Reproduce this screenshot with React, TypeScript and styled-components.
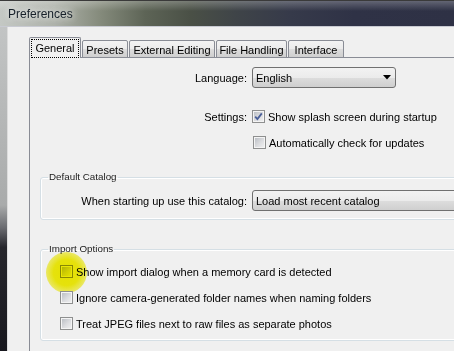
import * as React from 'react';
import styled, { createGlobalStyle } from 'styled-components';

const Global = createGlobalStyle`
    html, body {
        margin: 0;
        padding: 0;
        background: #f0f0f0;
    }
    body {
        font-family: "Liberation Sans", Arial, sans-serif;
        font-size: 11px;
        color: #000;
    }
`;

const Window = styled.div`
    width: 454px;
    height: 351px;
    overflow: hidden;
    display: flex;
    flex-direction: column;
`;

const TitleBar = styled.div`
    height: 27px;
    flex: 0 0 27px;
    display: flex;
    align-items: center;
    padding-left: 8px;
    border-top: 1px solid #3a3a3a;
    border-bottom: 1px solid #c8cad2;
    box-sizing: border-box;
    font-size: 12px;
    color: #17202a;
    text-shadow: 0 0 6px rgba(255, 255, 255, 0.9), 0 0 10px rgba(255, 255, 255, 0.6);
    background:
        linear-gradient(180deg, rgba(255, 255, 255, 0.25) 0%, rgba(255, 255, 255, 0) 40%),
        linear-gradient(90deg, #c4c8c4 0%, #aeb2aa 12%, #858b7c 22%, #5d6456 32%, #4a5046 42%, #3f4448 52%, #363a4a 64%, #2f3246 78%, #2e3145 100%);
`;

const Body = styled.div`
    flex: 1;
    display: flex;
    min-height: 0;
`;

const Frame = styled.div`
    flex: 0 0 7px;
    background: linear-gradient(180deg, #c2c4c4 0%, #a9abab 55%, #6a6b70 62%, #26262c 68%, #18181e 100%);
`;

const Client = styled.div`
    flex: 0 0 490px;
    background: #f0f0f0;
    border-left: 1px solid #dcdcdc;
    padding: 10px 0 0 21px;
    box-sizing: border-box;
`;

const TabList = styled.div`
    display: flex;
    align-items: flex-end;
    height: 20px;
    position: relative;
    z-index: 1;
`;

const Tab = styled.div<{ $w: number; $active?: boolean }>`
    width: ${p => p.$w}px;
    height: ${p => (p.$active ? 21 : 18)}px;
    box-sizing: border-box;
    margin-right: 1px;
    margin-bottom: -1px;
    border: 1px solid #898c95;
    border-bottom: ${p => (p.$active ? 'none' : '1px solid #898c95')};
    border-radius: 2px 2px 0 0;
    display: flex;
    align-items: center;
    justify-content: center;
    white-space: nowrap;
    background: ${p => (p.$active ? '#f0f0f0' : 'linear-gradient(180deg, #f3f3f3 0%, #ebebeb 50%, #dddddd 51%, #cfcfcf 100%)')};
    padding-top: ${p => (p.$active ? 0 : 1)}px;
`;

const Focus = styled.span`
    outline: 1px dotted #000;
    outline-offset: 0;
    padding: 2px 3px 3px;
    line-height: 12px;
`;

const Panel = styled.div`
    border-top: 1px solid #898c95;
    border-left: 1px solid #898c95;
    background: #f0f0f0;
    height: 320px;
    padding: 9px 10px 0 10px;
    box-sizing: border-box;
`;

const FormRow = styled.div<{ $h: number; $top: number }>`
    display: flex;
    align-items: center;
    gap: 5px;
    height: ${p => p.$h}px;
    margin-top: ${p => p.$top}px;
`;

const Label = styled.div<{ $w: number }>`
    width: ${p => p.$w}px;
    flex: 0 0 auto;
    text-align: right;
    white-space: nowrap;
`;

const Select = styled.div<{ $w: number }>`
    width: ${p => p.$w}px;
    height: 21px;
    box-sizing: border-box;
    border: 1px solid #707070;
    border-radius: 3px;
    background: linear-gradient(180deg, #f2f2f2 0%, #ebebeb 50%, #dddddd 51%, #cfcfcf 100%);
    display: flex;
    align-items: center;
    justify-content: space-between;
    padding: 0 4px 0 3px;
    flex: 0 0 auto;
    white-space: nowrap;
`;

const Check = styled.div`
    width: 13px;
    height: 13px;
    box-sizing: border-box;
    border: 1px solid #8e8f8f;
    box-shadow: inset 0 0 0 1px #f4f4f4;
    background: linear-gradient(135deg, #b6bac0 0%, #dcdde0 55%, #f2f2f2 100%);
    flex: 0 0 auto;
    display: flex;
    align-items: center;
    justify-content: center;
`;

const CheckRow = styled.div<{ $top: number }>`
    display: flex;
    align-items: center;
    gap: 3px;
    height: 13px;
    margin-top: ${p => p.$top}px;
    white-space: nowrap;
    position: relative;
`;

const Indent = styled.div<{ $left: number }>`
    padding-left: ${p => p.$left}px;
`;

const Group = styled.fieldset<{ $top: number; $pt: number; $pb: number }>`
    margin: ${p => p.$top}px 0 0 0;
    padding: ${p => p.$pt}px 0 ${p => p.$pb}px 0;
    border: 1px solid #d5dfe5;
    border-radius: 3px;
    box-shadow: inset 0 0 0 1px #ffffff;
    min-width: 0;
`;

const Legend = styled.legend`
    margin-left: 7px;
    padding: 0 1px;
    font-size: 9.8px;
    line-height: 12px;
    color: #1a1a1a;
`;

const Glow = styled.div`
    position: absolute;
    left: -14px;
    top: -13px;
    width: 41px;
    height: 41px;
    border-radius: 50%;
    background: radial-gradient(circle, rgba(244, 240, 0, 1) 0%, rgba(244, 240, 0, 0.95) 45%, rgba(244, 240, 0, 0.55) 72%, rgba(244, 240, 0, 0) 100%);
    mix-blend-mode: multiply;
    pointer-events: none;
`;

const Arrow = () => (
    <svg width="8" height="5" viewBox="0 0 8 5">
        <polygon points="0,0 8,0 4,4.5" fill="#000" />
    </svg>
);

const Tick = () => (
    <svg width="11" height="11" viewBox="0 0 11 11">
        <path d="M2.2 5.6 L4.4 8 L8.8 2.4" fill="none" stroke="#4a5f98" strokeWidth="1.8" />
    </svg>
);

type BoxProps = { checked?: boolean; glow?: boolean; text: string; top: number };

const CheckBox = (props: BoxProps) => (
    <CheckRow $top={props.top}>
        <Check>{props.checked && <Tick />}</Check>
        <span>{props.text}</span>
        {props.glow && <Glow />}
    </CheckRow>
);

const tabs = [
    { text: 'Presets', w: 46 },
    { text: 'External Editing', w: 86 },
    { text: 'File Handling', w: 71 },
    { text: 'Interface', w: 56 },
];

const App = () => {
    return (
        <Window>
            <Global />
            <TitleBar>Preferences</TitleBar>
            <Body>
                <Frame />
                <Client>
                    <TabList>
                        <Tab $w={52} $active>
                            <Focus>General</Focus>
                        </Tab>
                        {tabs.map(t => (
                            <Tab key={t.text} $w={t.w}>{t.text}</Tab>
                        ))}
                    </TabList>
                    <Panel>
                        <FormRow $h={21} $top={0}>
                            <Label $w={207}>Language:</Label>
                            <Select $w={144}>
                                <span>English</span>
                                <Arrow />
                            </Select>
                        </FormRow>
                        <FormRow $h={13} $top={22}>
                            <Label $w={207}>Settings:</Label>
                            <CheckBox checked text="Show splash screen during startup" top={0} />
                        </FormRow>
                        <Indent $left={213}>
                            <CheckBox text="Automatically check for updates" top={13} />
                        </Indent>

                        <Group $top={22} $pt={7} $pb={8}>
                            <Legend>Default Catalog</Legend>
                            <FormRow $h={21} $top={0}>
                                <Label $w={206}>When starting up use this catalog:</Label>
                                <Select $w={240}>
                                    <span>Load most recent catalog</span>
                                </Select>
                            </FormRow>
                        </Group>

                        <Group $top={23} $pt={10} $pb={10}>
                            <Legend>Import Options</Legend>
                            <Indent $left={19}>
                                <CheckBox glow text="Show import dialog when a memory card is detected" top={0} />
                                <CheckBox text="Ignore camera-generated folder names when naming folders" top={13} />
                                <CheckBox text="Treat JPEG files next to raw files as separate photos" top={13} />
                            </Indent>
                        </Group>
                    </Panel>
                </Client>
            </Body>
        </Window>
    );
};

export default App;
